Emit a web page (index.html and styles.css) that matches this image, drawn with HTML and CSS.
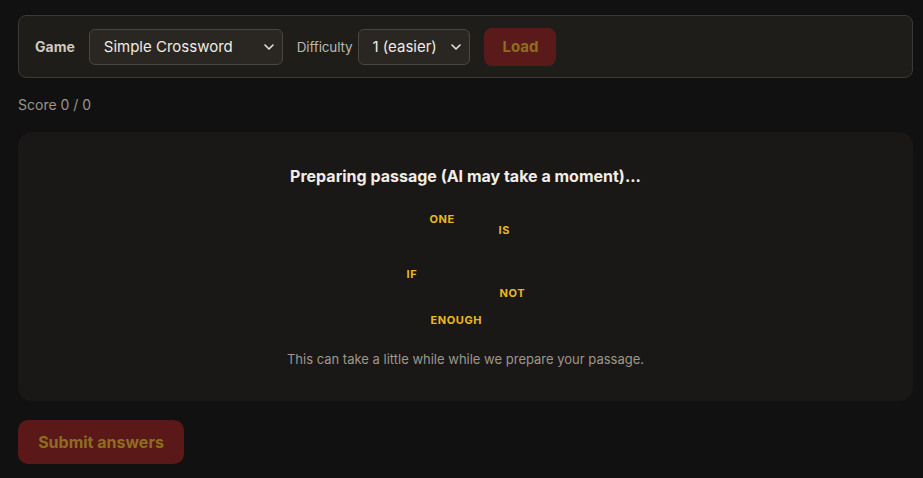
FILE: index.html
```html
<!DOCTYPE html>
<html>
<head>
<meta charset="utf-8">
<link rel="stylesheet" href="styles.css">
</head>
<body>
<div class="page">
  <div class="toolbar">
    <label class="lbl lbl-bold">Game</label>
    <div class="select sel-game"><span>Simple Crossword</span><svg class="chev" viewBox="0 0 10 6" width="10" height="6"><path d="M1 1l4 4 4-4" fill="none" stroke="#e8e4dc" stroke-width="1.6" stroke-linecap="round" stroke-linejoin="round"/></svg></div>
    <label class="lbl">Difficulty</label>
    <div class="select sel-diff"><span>1 (easier)</span><svg class="chev" viewBox="0 0 10 6" width="10" height="6"><path d="M1 1l4 4 4-4" fill="none" stroke="#e8e4dc" stroke-width="1.6" stroke-linecap="round" stroke-linejoin="round"/></svg></div>
    <button class="btn btn-load">Load</button>
  </div>
  <div class="score">Score 0 / 0</div>
  <div class="card">
    <div class="title">Preparing passage (AI may take a moment)...</div>
    <div class="words">
      <span class="w w-one">ONE</span>
      <span class="w w-is">IS</span>
      <span class="w w-if">IF</span>
      <span class="w w-not">NOT</span>
      <span class="w w-enough">ENOUGH</span>
    </div>
    <div class="sub">This can take a little while while we prepare your passage.</div>
  </div>
  <button class="btn btn-submit">Submit answers</button>
</div>
</body>
</html>
```
FILE: styles.css
```css
html, body { margin: 0; padding: 0; background: #121112; }
body { font-family: Inter, "Open Sans", "Noto Sans", sans-serif; color: #e8e4dc; }
.page { padding: 15px 10px 0 18px; display: flex; flex-direction: column; align-items: flex-start; }
.toolbar {
  box-sizing: border-box; width: 895px; height: 63px;
  background: #1e1d1a; border: 1px solid #3b3935; border-radius: 8px;
  display: flex; align-items: center; padding: 0 16px; gap: 0;
}
.lbl { font-size: 14px; color: #bdb7ad; }
.lbl-bold { font-weight: 700; color: #cfc9bf; margin-right: 14px; }
.lbl:not(.lbl-bold) { font-size: 13.5px; letter-spacing: -0.15px; }
.select {
  box-sizing: border-box; height: 36px; border: 1px solid #4a4641; border-radius: 6px;
  background: #2a2622; display: flex; align-items: center; justify-content: space-between;
  padding: 0 8px 0 14px; font-size: 15px; color: #efebe4;
}
.sel-game { width: 194px; margin-right: 14px; }
.sel-diff { width: 112px; margin-left: 6px; margin-right: 14px; padding-left: 13px; }
.chev { display: block; }
.btn { border: none; font-family: inherit; font-weight: 700; cursor: pointer; }
.btn-load {
  width: 72px; height: 38px; border-radius: 8px; background: #5a1a1a; color: #8f6d1f; font-size: 15px;
}
.score { margin-top: 17px; font-size: 14px; color: #9a958e; height: 20px; line-height: 20px; }
.card {
  margin-top: 17px; box-sizing: border-box; width: 895px; height: 269px;
  background: #1a1816; border-radius: 14px;
  display: flex; flex-direction: column; align-items: center; padding-top: 34px;
}
.title { font-size: 16px; font-weight: 700; color: #f1ede6; line-height: 20px; }
.words { position: relative; width: 140px; height: 126px; margin-top: 23px; }
.w { position: absolute; font-size: 11px; font-weight: 700; color: #e8b820; letter-spacing: 0.6px; line-height: 14px; }
.w-one { left: 34px; top: 3px; }
.w-is { left: 103px; top: 14px; }
.w-if { left: 11px; top: 58px; }
.w-not { left: 104px; top: 77px; }
.w-enough { left: 35px; top: 104px; }
.sub { margin-top: 15px; font-size: 13px; color: #9d978e; line-height: 18px; }
.btn-submit {
  margin-top: 19px; width: 166px; height: 44px; border-radius: 10px; background: #5a1818; color: #8f6d20; font-size: 16px;
}
```
